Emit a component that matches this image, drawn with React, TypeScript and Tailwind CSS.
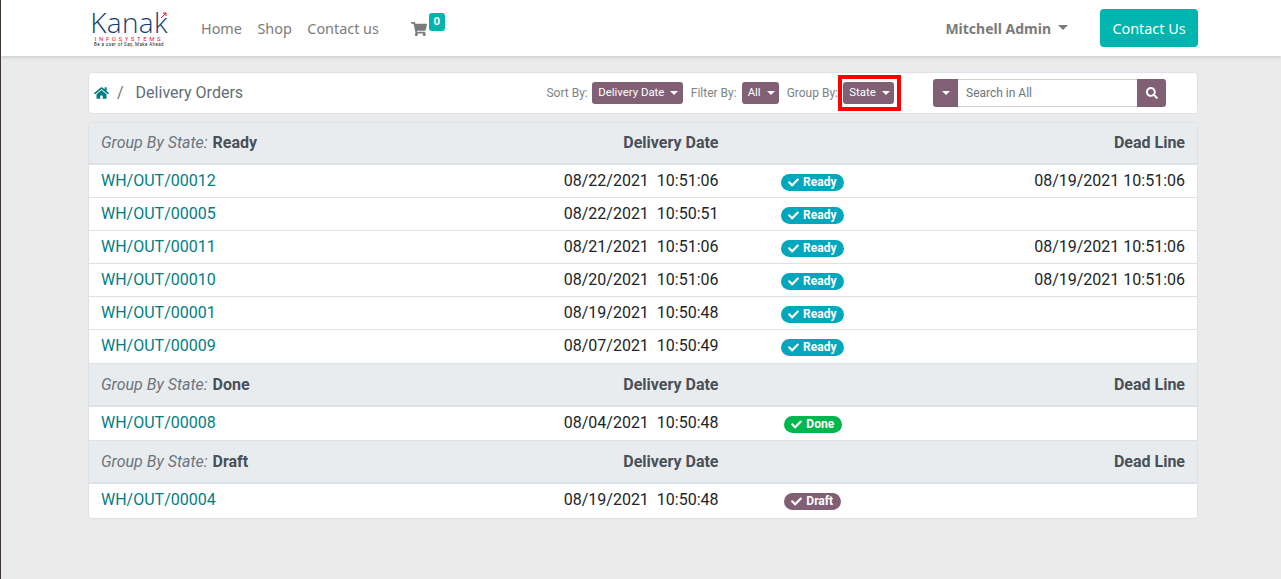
import React from "react";
import { FaHome, FaShoppingCart, FaSearch, FaCheck } from "react-icons/fa";

const Caret = ({ className = "" }: { className?: string }) => (
  <span className={"inline-block w-0 h-0 border-x-[4.5px] border-x-transparent border-t-[4.5px] " + className} />
);

const Pill = ({ label, w }: { label: string; w: string }) => (
  <button className={"h-[22px] pl-[2px] rounded-[3px] bg-[#816075] text-white text-[11.4px] flex items-center justify-center gap-[6px] " + w}>
    {label}
    <Caret className="border-t-white" />
  </button>
);

type Row = { id: string; date: string; state: "Ready" | "Done" | "Draft"; dead?: string };

const badge = {
  Ready: "bg-[#00a7bd] w-[63px]",
  Done: "bg-[#00b74f] w-[58px] ml-[1px]",
  Draft: "bg-[#816075] w-[57px]",
};

const Header = ({ state, h }: { state: string; h: string }) => (
  <div className={"grid grid-cols-[617.5px_187.5px_1fr] items-center px-3 bg-[#e9ecef] border-b-2 border-[#dee2e6] font-bold text-[16px] text-[#495057] " + h}>
    <div className="flex justify-between">
      <span>
        <span className="italic font-normal text-[#6c757d]">Group By State:</span>
        <span className="ml-[5px]">{state}</span>
      </span>
      <span>Delivery Date</span>
    </div>
    <span />
    <span className="text-right">Dead Line</span>
  </div>
);

const DataRow = ({ r, last, tall }: { r: Row; last?: boolean; tall?: boolean }) => (
  <div
    className={
      "grid grid-cols-[617.5px_187.5px_1fr] items-center px-3 text-[16px] text-[#212529] " +
      (last ? "h-[33px]" : "border-b border-[#dee2e6] ") +
      (!last && tall ? "h-[34px] pb-[1px]" : !last ? "h-[33px]" : "")
    }
  >
    <div className="flex justify-between">
      <a className="text-[#017e84]">{r.id}</a>
      <span className="whitespace-pre">{r.date}</span>
    </div>
    <div className={"flex justify-center " + (last ? "pt-[3px]" : "pt-[2px]")}>
      <span className={"h-[17px] rounded-full text-white text-[12px] font-bold flex items-center justify-center gap-[4px] " + badge[r.state]}>
        <FaCheck className="w-[11px] h-[11px]" />
        {r.state}
      </span>
    </div>
    <span className="text-right">{r.dead}</span>
  </div>
);

const ready: Row[] = [
  { id: "WH/OUT/00012", date: "08/22/2021  10:51:06", state: "Ready", dead: "08/19/2021 10:51:06" },
  { id: "WH/OUT/00005", date: "08/22/2021  10:50:51", state: "Ready" },
  { id: "WH/OUT/00011", date: "08/21/2021  10:51:06", state: "Ready", dead: "08/19/2021 10:51:06" },
  { id: "WH/OUT/00010", date: "08/20/2021  10:51:06", state: "Ready", dead: "08/19/2021 10:51:06" },
  { id: "WH/OUT/00001", date: "08/19/2021  10:50:48", state: "Ready" },
  { id: "WH/OUT/00009", date: "08/07/2021  10:50:49", state: "Ready" },
];

export default function App() {
  return (
    <div className="min-h-[579px] bg-[#ebebeb] border-l border-[#3f3539] font-['Roboto',sans-serif] overflow-hidden">
      <nav className="h-[56px] bg-white shadow-[0_1px_4px_rgba(0,0,0,0.15)] pl-[87px] flex items-center">
        <div className="w-[1110px] flex items-center">
          <div className="w-[76px] ml-[3px] flex flex-col items-center relative">
            <span className="text-[#12416f] text-[28px] leading-[25px] font-['Open_Sans',sans-serif] font-light tracking-[0.3px]">Kanak</span>
            <span className="text-[#e8132b] text-[6px] leading-[7px] tracking-[2.6px] whitespace-nowrap">INFOSYSTEMS</span>
            <span className="text-[#222222] text-[4.5px] leading-[5px] whitespace-nowrap tracking-[0.4px]">Be a user of Say, Make Ahead</span>
            <svg className="absolute right-[0px] top-[2px]" width="7" height="7" viewBox="0 0 7 7" fill="none" stroke="#e8132b" strokeWidth="1"><path d="M1 6 6 1M3 1h3v3" /></svg>
          </div>
          <div className="ml-[34px] flex items-center gap-[15.5px] text-[#7c7b7b] text-[14.4px] font-['Noto_Sans',sans-serif] pt-[1px]">
            <span>Home</span>
            <span>Shop</span>
            <span>Contact us</span>
          </div>
          <div className="ml-[32px] flex relative items-center text-[#7c7b7b] pt-[2px]">
            <FaShoppingCart className="w-[16px] h-[16px]" />
            <span className="absolute left-[18px] top-[-6px] w-[16px] h-[18px] rounded-[3px] bg-[#00b5ad] text-white text-[11.5px] font-bold flex items-center justify-center">0</span>
          </div>
          <div className="ml-auto flex items-center gap-[7px] text-[#7c7b7b] font-bold mr-[32px] pt-[1px]">
            <span className="font-['Noto_Sans',sans-serif] text-[14px]">Mitchell Admin</span>
            <Caret className="border-t-[#7c7b7b] border-x-[5px] border-t-[5px] mt-[-2px]" />
          </div>
          <button className="w-[98px] h-[38px] pt-[1px] bg-[#00b5ad] text-white text-[14.4px] font-['Noto_Sans',sans-serif] rounded-[4px]">Contact Us</button>
        </div>
      </nav>

      <main className="ml-[87px] w-[1110px] pt-[16px]">
        <div className="h-[42px] bg-white rounded-[4px] border border-[#dee2e6] flex items-center pl-[5px] text-[#6c757d]">
          <FaHome className="w-[15px] h-[14px] text-[#017e84]" />
          <span className="ml-[8px] text-[16px]">/</span>
          <span className="ml-[12px] text-[16px] text-[#626e78]">Delivery Orders</span>
          <div className="ml-auto flex items-center text-[12px] text-[#7c8288]">
            <span>Sort By:</span>
            <span className="ml-[4px]"><Pill label="Delivery Date" w="w-[91px]" /></span>
            <span className="ml-[8px]">Filter By:</span>
            <span className="ml-[5px]"><Pill label="All" w="w-[37px]" /></span>
            <span className="ml-[8px]">Group By:</span>
            <span className="border-[4px] border-[#ff0000] pl-[1px] pr-[3px] h-[36px] flex items-center">
              <Pill label="State" w="w-[51px]" />
            </span>
            <div className="ml-[32px] mr-[31px] flex h-[28px] w-[233px]">
              <span className="w-[25px] bg-[#816075] rounded-l-[3px] flex items-center justify-center">
                <Caret className="border-t-white" />
              </span>
              <span className="flex-1 border-y border-[#ced4da] bg-white pl-[8px] flex items-center text-[12px] text-[#6c757d]">Search in All</span>
              <span className="w-[29px] bg-[#816075] rounded-r-[3px] flex items-center justify-center text-white">
                <FaSearch className="w-[12px] h-[12px]" />
              </span>
            </div>
          </div>
        </div>

        <div className="mt-[8px] rounded-[4px] border border-[#dee2e6] bg-white overflow-hidden">
          <Header state="Ready" h="h-[42px]" />
          {ready.map((r, i) => (
            <DataRow key={r.id} r={r} tall={i === 5} />
          ))}
          <Header state="Done" h="h-[43px]" />
          <div className="h-[35px] border-b border-[#dee2e6]">
            <div className="-mt-[1px]">
              <DataRow r={{ id: "WH/OUT/00008", date: "08/04/2021  10:50:48", state: "Done" }} last />
            </div>
          </div>
          <Header state="Draft" h="h-[43px]" />
          <div className="h-[35px]">
            <div className="-mt-[1px]">
              <DataRow r={{ id: "WH/OUT/00004", date: "08/19/2021  10:50:48", state: "Draft" }} last />
            </div>
          </div>
        </div>
      </main>
    </div>
  );
}
